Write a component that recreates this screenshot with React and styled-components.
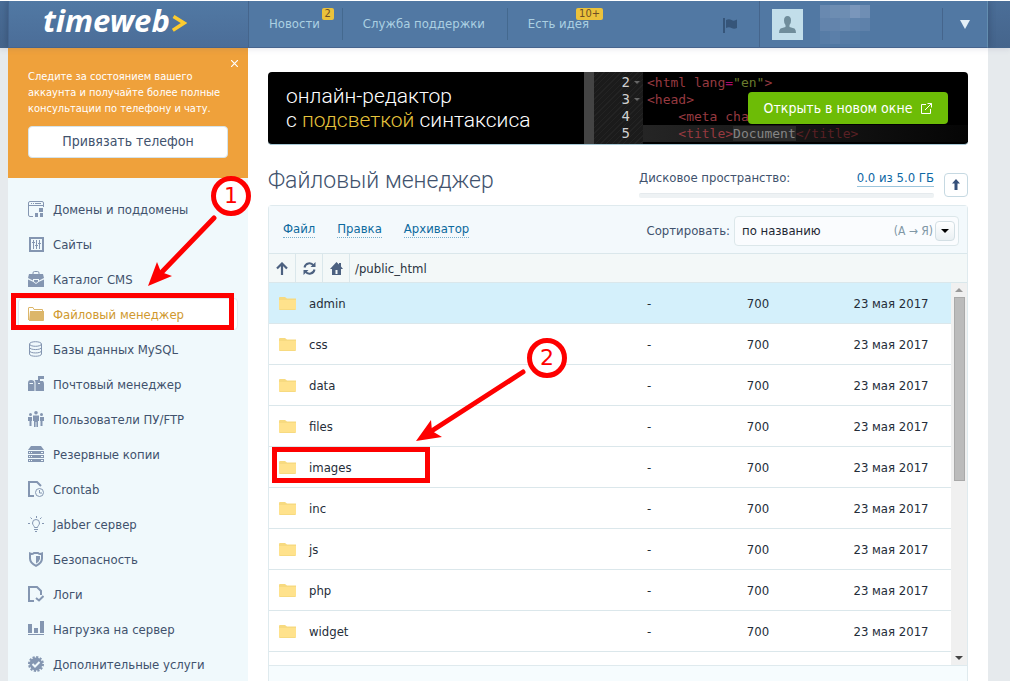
import React from "react";
import styled, { createGlobalStyle, css } from "styled-components";

const GlobalStyle = createGlobalStyle`
  *, *::before, *::after { box-sizing: border-box; }
  body {
    margin: 0;
    background: #e6eaed;
    color: #41526d;
    font-family: "DejaVu Sans Condensed", "Noto Sans", sans-serif;
    font-size: 13px;
    line-height: 16px;
    overflow-x: hidden;
  }
  button, select { font: inherit; color: inherit; }
  a { color: inherit; text-decoration: none; }
  ul { list-style: none; margin: 0; padding: 0; }
`;

const Page = styled.div`
  position: relative;
  display: flex;
  flex-direction: column;
  height: 100vh;
  min-height: 600px;
  overflow: hidden;
`;

/* ---------- Header ---------- */

const Header = styled.header`
  flex: none;
  height: 48px;
  padding: 0 22px 0 8px;
  background: linear-gradient(#4b6e98, #45658c);
  border-top: 1px solid #fff;
  box-shadow: 0 1px 6px rgba(70, 80, 110, 0.14);
  z-index: 1;
`;

const HeaderInner = styled.div`
  display: flex;
  height: 47px;
  background: #5178a3;
  border-left: 1px solid #456690;
  border-right: 1px solid #638eb0;
  border-bottom: 1px solid #46648e;
  box-shadow: 0 0 8px rgba(35, 55, 85, 0.5);
  clip-path: inset(0 -8px);
`;

const Brand = styled.a`
  display: flex;
  align-items: flex-start;
  width: 240px;
  padding-left: 34px;
  gap: 2px;
  background: linear-gradient(#5179a4, #4b6d98);
  border-right: 1px solid #45658c;
  color: #fff;
  font: italic bold 31px/38px "Noto Sans", sans-serif;
  svg { margin-top: 14px; }
`;

const TopNav = styled.nav`
  display: flex;
  align-items: center;
  flex: 1;
`;

const TopLink = styled.a`
  position: relative;
  display: flex;
  align-items: center;
  height: 32px;
  padding: 0 22px 0 20px;
  border-right: 1px solid #44698f;
  color: #abd0e2;
  white-space: nowrap;
  &:last-child { border: 0; }
`;

const Count = styled.span`
  position: absolute;
  top: 0;
  right: 8px;
  padding: 0 3px;
  border-radius: 2px;
  background: #ebc23b;
  color: #6e4f26;
  font-size: 11px;
  line-height: 12px;
`;

const FlagButton = styled.button`
  width: 56px;
  padding: 0;
  border: 0;
  border-right: 1px solid #45658c;
  background: none;
  text-align: left;
  svg { display: block; margin-top: 2px; }
`;

const Account = styled.div`
  display: flex;
  align-items: center;
  width: 182px;
  padding-left: 12px;
  gap: 17px;
`;

const Avatar = styled.span`
  display: flex;
  width: 31px;
  height: 31px;
  align-items: center;
  justify-content: center;
  background: #c2deea;
`;

const Mosaic = styled.span`
  display: grid;
  grid-template-columns: repeat(5, 10px);
  grid-auto-rows: 13px;
`;

const Pixel = styled.i`
  background: rgba(190, 200, 225, ${(p) => p.$level / 100});
`;

const AccountMenu = styled.button`
  display: flex;
  align-items: center;
  justify-content: center;
  width: 45px;
  height: 32px;
  margin-top: 7px;
  padding: 0;
  border: 0;
  border-left: 1px solid #45658c;
  background: none;
`;

/* ---------- Body and sidebar ---------- */

const Body = styled.div`
  display: flex;
  flex: 1;
  min-height: 0;
  margin: 0 22px 0 8px;
  background: #fff;
`;

const Sidebar = styled.aside`
  flex: none;
  width: 240px;
  background: #f0f9fc;
`;

const Notice = styled.section`
  position: relative;
  height: 130px;
  padding: 21px 20px;
  background: #efa13b;
  color: #fff;
  p { margin: 0 0 9px; font-size: 11px; line-height: 16px; white-space: nowrap; }
`;

const NoticeClose = styled.button`
  position: absolute;
  top: 7px;
  right: 6px;
  width: 16px;
  height: 16px;
  padding: 0;
  border: 0;
  background: none;
  svg { display: block; margin: auto; }
`;

const PhoneButton = styled.button`
  width: 100%;
  height: 32px;
  padding: 0 0 2px;
  border: 1px solid #d5e3ea;
  border-radius: 4px;
  background: #fff;
  color: #41526d;
  font-size: 14px;
`;

const Menu = styled.ul`
  display: flex;
  flex-direction: column;
  gap: 3px;
  padding: 15px 10px 0;
`;

const MenuLink = styled.a`
  display: flex;
  align-items: center;
  gap: 9px;
  height: 32px;
  padding: 0 9px;
  border: 1px solid transparent;
  border-radius: 4px;
  white-space: nowrap;
  svg { flex: none; color: #8496b1; }
  span { padding-top: 2px; }
  ${(p) => p.$active && css`
    background: #fff;
    border-color: #e0eaef;
    color: #d0992f;
    svg { color: #dcb66a; }
  `}
`;

/* ---------- Main ---------- */

const Main = styled.main`
  display: flex;
  flex-direction: column;
  flex: 1;
  min-width: 0;
  padding: 24px 20px 0;
`;

const Banner = styled.section`
  position: relative;
  display: flex;
  flex: none;
  height: 73px;
  overflow: hidden;
  border-radius: 4px;
  border-bottom: 1px solid #a7c8d5;
  background: #000;
`;

const Slogan = styled.p`
  flex: 1;
  margin: 0;
  padding: 12px 18px;
  color: #fff;
  font: 300 21px/24px Roboto, sans-serif;
  white-space: nowrap;
  em { color: #e7c43c; font-style: normal; }
`;

const Editor = styled.div`
  display: flex;
  flex: none;
  width: 384px;
  border-left: 10px solid #444;
  font: 13px/17px "DejaVu Sans Mono", monospace;
`;

const Gutter = styled.div`
  width: 49px;
  padding: 2px 3px;
  background: repeating-linear-gradient(135deg, #1b1b1b 0 3px, #232323 3px 4px);
  color: #d0d0d0;
`;

const GutterLine = styled.div`
  display: flex;
  align-items: center;
  justify-content: flex-end;
  gap: 4px;
  font-size: 14px;
  svg { width: 6px; }
`;

const Code = styled.pre`
  flex: 1;
  margin: 0;
  padding-top: 2px;
  font: inherit;
`;

const CodeLine = styled.div`
  padding-left: 4px;
  background: ${(p) => (p.$current ? "linear-gradient(90deg, #252525, #050505)" : "none")};
  color: #963a40;
`;

const Tok = styled.span`
  color: ${(p) => p.$color};
  background: ${(p) => p.$bg || "none"};
`;

const OpenButton = styled.a`
  position: absolute;
  top: 20px;
  right: 20px;
  display: flex;
  align-items: center;
  justify-content: center;
  gap: 9px;
  width: 200px;
  height: 32px;
  border-radius: 4px;
  background: #6dbc06;
  color: #fff;
  font-size: 14px;
`;

const TitleRow = styled.div`
  display: flex;
  flex: none;
  height: 60px;
  padding-top: 20px;
  h1 {
    flex: 1;
    margin: 0;
    font: 300 23px/32px Roboto, sans-serif;
    white-space: nowrap;
  }
`;

const Disk = styled.div`
  width: 295px;
  margin-right: 10px;
  padding-top: 5px;
`;

const DiskLabel = styled.div`
  display: flex;
  justify-content: space-between;
  align-items: flex-start;
  a { color: #0d68a5; border-bottom: 1px solid #9cc5dc; }
`;

const DiskBar = styled.div`
  height: 5px;
  margin-top: 6px;
  border-radius: 2px;
  background: #eef2f4;
  border-top: 1px solid #e5eaed;
`;

const UpButton = styled.button`
  display: flex;
  align-items: center;
  justify-content: center;
  width: 24px;
  height: 24px;
  margin-top: 8px;
  padding: 0 0 2px;
  border: 1px solid #c6d9e2;
  border-radius: 4px;
  background: #fff;
`;

const Panel = styled.section`
  display: flex;
  flex-direction: column;
  flex: 1;
  min-height: 0;
  border: 1px solid #dfeaee;
  border-bottom: 0;
  border-radius: 4px 4px 0 0;
  background: #f6fcfe;
`;

const Toolbar = styled.div`
  display: flex;
  flex: none;
  align-items: flex-start;
  gap: 22px;
  height: 48px;
  padding: 10px 8px 0 14px;
  border-bottom: 1px solid #dae7eb;
  background: #f3f9fc;
`;

const ToolLink = styled.a`
  margin-top: 5px;
  color: #0d6a9e;
  border-bottom: 1px dotted #78afcb;
`;

const Sorter = styled.div`
  display: flex;
  align-items: center;
  gap: 4px;
  margin-left: auto;
`;

const SelectBox = styled.div`
  position: relative;
  width: 225px;
  select {
    display: block;
    width: 100%;
    height: 30px;
    padding: 0 90px 1px 7px;
    border: 1px solid #dce7ea;
    border-radius: 4px;
    background: #fafcfe;
    color: #1e2733;
    appearance: none;
  }
`;

const SelectHint = styled.span`
  position: absolute;
  top: 0;
  right: 4px;
  display: flex;
  align-items: center;
  gap: 2px;
  height: 30px;
  color: #8097a5;
  font-size: 12px;
  pointer-events: none;
`;

const SelectArrow = styled.span`
  display: flex;
  align-items: center;
  justify-content: center;
  width: 20px;
  height: 20px;
  border: 1px solid #d3dfe4;
  border-radius: 4px;
  background: linear-gradient(#fff, #eaf0f3);
`;

const PathBar = styled.div`
  display: flex;
  flex: none;
  height: 29px;
  border-bottom: 1px solid #dae7eb;
  background: #f3f8f8;
  color: #29323e;
  line-height: 29px;
  span { padding-left: 5px; }
`;

const PathButton = styled.button`
  display: flex;
  align-items: center;
  justify-content: center;
  width: 27px;
  padding: 0;
  border: 0;
  border-right: 1px solid #dae7eb;
  background: none;
`;

const FileScroll = styled.div`
  display: flex;
  flex: none;
  height: 383px;
  overflow: hidden;
  border-bottom: 1px solid #dfeaee;
  background: #fff;
`;

const FileTable = styled.table`
  flex: 1;
  width: 100%;
  height: max-content;
  border-collapse: separate;
  border-spacing: 0;
  table-layout: fixed;
  color: #252d39;
`;

const FileRow = styled.tr`
  background: ${(p) => (p.$selected ? "#d4f0fb" : "#fff")};
  td {
    height: 41px;
    padding: 2px 0 0;
    border-bottom: 1px solid #dbe7eb;
    text-align: center;
    white-space: nowrap;
  }
  td:first-child { padding: 0 0 0 10px; }
  td:nth-child(2) { text-align: left; }
  svg { display: block; }
`;

const Scrollbar = styled.div`
  display: flex;
  flex-direction: column;
  align-items: center;
  flex: none;
  width: 16px;
  padding: 5px 0;
  background: #f0f0f0;
`;

const Thumb = styled.div`
  width: 11px;
  height: 184px;
  margin: 5px 0 auto;
  border: 1px solid #a9a9a9;
  background: #bbb;
`;

/* ---------- Annotations over the page ---------- */

const Frame = styled.div`
  position: absolute;
  z-index: 3;
  left: ${(p) => p.$x}px;
  top: ${(p) => p.$y}px;
  width: ${(p) => p.$w}px;
  height: ${(p) => p.$h}px;
  border: 5px solid #fe0000;
  pointer-events: none;
`;

const Step = styled.div`
  position: absolute;
  z-index: 3;
  left: ${(p) => p.$x}px;
  top: ${(p) => p.$y}px;
  display: flex;
  align-items: center;
  justify-content: center;
  width: 40px;
  height: 40px;
  border: 5px solid #fe0000;
  border-radius: 50%;
  background: #fff;
  color: #fe0000;
  font: 22px/30px "DejaVu Sans", sans-serif;
`;

const Arrows = styled.svg`
  position: absolute;
  z-index: 3;
  left: 140px;
  top: 200px;
  pointer-events: none;
`;

/* ---------- Icons ---------- */

const Icon = ({ children, size = 16 }) => (
  <svg width={size} height={size} viewBox="0 0 16 16" fill="currentColor" aria-hidden="true">
    {children}
  </svg>
);

const stroke = { fill: "none", stroke: "currentColor" };

const icons = {
  domains: (
    <Icon>
      <path {...stroke} d="M5 15.5H2Q.5 15.5 .5 14V2Q.5.5 2 .5h12Q15.5.5 15.5 2v4M1 4.5h14" />
      <path d="M3 2h1v1H3zM5 2h1v1H5zM7 2h6v1H7zM11 7h4v4h-4zM7 12h3v4H7zM12 12h3v4h-3z" />
    </Icon>
  ),
  sites: (
    <Icon>
      <path {...stroke} strokeWidth="2" d="M2 2h13v13H2z" />
      <path d="M5 4h1v9H5zM8 4h1v9H8zM11 4h1v9h-1zM4 6h3v1H4zM7 9h3v1H7zM10 7h3v1h-3z" />
    </Icon>
  ),
  catalog: (
    <Icon>
      <path {...stroke} d="M5 3.5V2Q5 .5 6.500.5h3Q11 .5 11 2v1.500" />
      <path d="M1 3h14l1 4-5 2.500V8H5v1.500L0 7zM6 9h4v1.500L8 12l-2-1.500z" />
      <path d="M0 8.500l5 2.300L8 13l3-2.200 5-2.300V16H0z" />
    </Icon>
  ),
  files: (
    <Icon>
      <path {...stroke} d="M.5 14V2Q.5 1.500 1 1.500h4l1 2h8.500V5" />
      <path d="M2 5h14v9q0 1-1 1H1z" />
    </Icon>
  ),
  database: (
    <Icon>
      <g {...stroke}>
        <ellipse cx="7.500" cy="3" rx="6" ry="2.300" />
        <path d="M1.500 3v10c0 3 12 3 12 0V3M1.500 6.300c0 3 12 3 12 0M1.500 9.700c0 3 12 3 12 0" />
      </g>
    </Icon>
  ),
  mail: (
    <Icon>
      <path fillRule="evenodd" d="M0 15V7q0-3 3-3 3.500 0 3.500 3v8zM1.500 7v1H5V7zM7.500 15V7q0-2-1-3H10v4h2V5h3q1 1 1 3v7z" />
      <path d="M10 0h6v3h-4v4h-2z" />
    </Icon>
  ),
  users: (
    <Icon>
      <circle cx="2.500" cy="3.500" r="1.500" />
      <circle cx="8" cy="1.800" r="1.800" />
      <circle cx="13.500" cy="3.500" r="1.500" />
      <path d="M0 6h4v4H3.500v5h-2v-5H0zM5 4.500h6V10h-1v6H8.400v-5h-.8v5H6v-6H5zM12 6h4v4h-1.500v5h-2v-5H12z" />
    </Icon>
  ),
  backup: (
    <Icon>
      <path d="M3 0h10l3 4H0z" />
      <path fillRule="evenodd" d="M0 5h16v3H0zm1 1v1h1V6zm2 0v1h1V6zm10 0v1h2V6zM0 9h16v3H0zm1 1v1h1v-1zm2 0v1h1v-1zm10 0v1h2v-1zM0 13h16v3H0zm1 1v1h1v-1zm2 0v1h1v-1zm10 0v1h2v-1z" />
    </Icon>
  ),
  crontab: (
    <Icon>
      <path {...stroke} strokeWidth="2" d="M6 15H1V1h8l4 4" />
      <circle {...stroke} cx="11.500" cy="11.500" r="4" />
      <path {...stroke} d="M11.500 9v3H14" />
    </Icon>
  ),
  jabber: (
    <Icon>
      <path {...stroke} d="M6.500 11.500C6.500 10 4.500 9 4.500 7a3.500 3.500 0 0 1 7 0c0 2-2 3-2 4.500zM6 13.500h4M7 15.500h2M0 7.500h2M14 7.500h2M2.500 1.500l1.500 1.500M13.500 1.500L12 3M8.500 0v2" />
    </Icon>
  ),
  security: (
    <Icon>
      <path {...stroke} strokeWidth="2" d="M2 2.500q3 1 4-.5h4q1 1.500 4 .5v5Q14 12 8 14.800 2 12 2 7.500z" />
      <path d="M8 5h4v3q-1 3-4 4.500z" />
    </Icon>
  ),
  logs: (
    <Icon>
      <path {...stroke} strokeWidth="2" d="M6 15H1V1h8l4 4v4M8 12l3 2.500 4.500-4.500" />
    </Icon>
  ),
  load: (
    <Icon>
      <path d="M0 3h4v9H0zM6 7h4v5H6zM12 0h4v12h-4zM0 13h16v1H0z" />
    </Icon>
  ),
  extra: (
    <Icon>
      <circle cx="8" cy="8" r="6.500" />
      <circle {...stroke} cx="8" cy="8" r="7" strokeWidth="2" strokeDasharray="2.200 1.460" />
      <path fill="none" stroke="#f0f9fc" strokeWidth="2" d="M4.500 8l2.500 2.500L11.500 6" />
    </Icon>
  ),
};

const menu = [
  ["domains", "Домены и поддомены"],
  ["sites", "Сайты"],
  ["catalog", "Каталог CMS"],
  ["files", "Файловый менеджер"],
  ["database", "Базы данных MySQL"],
  ["mail", "Почтовый менеджер"],
  ["users", "Пользователи ПУ/FTP"],
  ["backup", "Резервные копии"],
  ["crontab", "Crontab"],
  ["jabber", "Jabber сервер"],
  ["security", "Безопасность"],
  ["logs", "Логи"],
  ["load", "Нагрузка на сервер"],
  ["extra", "Дополнительные услуги"],
];

const folders = ["admin", "css", "data", "files", "images", "inc", "js", "php", "widget"];

const pixels = [22, 26, 26, 38, 28, 16, 16, 20, 14, 12, 6, 10, 5, 4, 0];

const Triangle = ({ w, h, color, up }) => (
  <svg width={w} height={h} viewBox="0 0 10 10" preserveAspectRatio="none" fill={color} aria-hidden="true">
    <path d={up ? "M0 10h10L5 0z" : "M0 0h10L5 10z"} />
  </svg>
);

const FolderIcon = () => (
  <svg width="17" height="13" viewBox="0 0 17 13" aria-hidden="true">
    <path fill="#f7da80" d="M0 1Q0 0 1 0h5l2 1.500h9V12q0 1-1 1H1q-1 0-1-1z" />
    <path fill="#ffe28c" d="M0 3h17v9H0z" />
  </svg>
);

export default function App() {
  return (
    <>
      <GlobalStyle />
      <Page>
        <Header>
          <HeaderInner>
            <Brand href="#home">
              timeweb
              <svg width="15" height="17" viewBox="0 0 15 17" aria-hidden="true">
                <path d="M1.500 1.500L12 8 .8 15.300" fill="none" stroke="#fccb2f" strokeWidth="3.600" />
              </svg>
            </Brand>
            <TopNav>
              <TopLink href="#news">Новости<Count>2</Count></TopLink>
              <TopLink href="#support">Служба поддержки</TopLink>
              <TopLink href="#idea">Есть идея<Count>10+</Count></TopLink>
            </TopNav>
            <FlagButton aria-label="Флаг">
              <svg width="36" height="15" viewBox="0 0 36 15" fill="#365579">
                <path d="M19 0h2v15h-2zM22 2q3-1.500 5.500 0T33 1.500V10q-3 1.500-5.500 0T22 10z" />
              </svg>
            </FlagButton>
            <Account>
              <Avatar>
                <svg width="17" height="17" viewBox="0 0 17 17" fill="#6f8d9b" aria-hidden="true">
                  <path d="M8.500 0Q12 0 12 4.500 12 8 10.500 9v2l5 1.500q1.500 1 1.500 4.500H0q0-3.500 1.500-4.500l5-1.500V9Q5 8 5 4.500 5 0 8.500 0z" />
                </svg>
              </Avatar>
              <Mosaic>{pixels.map((level, i) => <Pixel key={i} $level={level} />)}</Mosaic>
            </Account>
            <AccountMenu aria-label="Меню аккаунта"><Triangle w={10} h={9} color="#e3eff7" /></AccountMenu>
          </HeaderInner>
        </Header>

        <Body>
          <Sidebar>
            <Notice>
              <NoticeClose aria-label="Закрыть">
                <svg width="7" height="7" viewBox="0 0 7 7" stroke="#fff" strokeWidth="1.200"><path d="M0 0l7 7M7 0L0 7" /></svg>
              </NoticeClose>
              <p>Следите за состоянием вашего<br />аккаунта и получайте более полные<br />консультации по телефону и чату.</p>
              <PhoneButton>Привязать телефон</PhoneButton>
            </Notice>
            <nav>
              <Menu>
                {menu.map(([id, label]) => (
                  <li key={id}>
                    <MenuLink href={`#${id}`} $active={id === "files"}>{icons[id]}<span>{label}</span></MenuLink>
                  </li>
                ))}
              </Menu>
            </nav>
          </Sidebar>

          <Main>
            <Banner>
              <Slogan>онлайн-редактор<br />с <em>подсветкой</em> синтаксиса</Slogan>
              <Editor>
                <Gutter>
                  {[2, 3, 4, 5].map((n) => (
                    <GutterLine key={n}>
                      {n}
                      <Triangle w={6} h={3} color={n < 4 ? "#666" : "none"} />
                    </GutterLine>
                  ))}
                </Gutter>
                <Code>
                  <CodeLine>{"<html lang"}<Tok $color="#a80b6b">=</Tok><Tok $color="#6a7b2d">"en"</Tok>{">"}</CodeLine>
                  <CodeLine>{"<head>"}</CodeLine>
                  <CodeLine>{"    <meta cha"}</CodeLine>
                  <CodeLine $current>{"    <title>"}<Tok $color="#858585" $bg="#2b2b2b">Document</Tok><Tok $color="#592024">{"</title>"}</Tok></CodeLine>
                </Code>
              </Editor>
              <OpenButton href="#editor">
                Открыть в новом окне
                <svg width="11" height="11" viewBox="0 0 11 11" fill="none" stroke="#fff" aria-hidden="true">
                  <path d="M5 1.500H.5v9h9V6M6.500.5h4v4M10.500.5L4 7" />
                </svg>
              </OpenButton>
            </Banner>

            <TitleRow>
              <h1>Файловый менеджер</h1>
              <Disk>
                <DiskLabel><span>Дисковое пространство:</span><a href="#disk">0.0 из 5.0 ГБ</a></DiskLabel>
                <DiskBar />
              </Disk>
              <UpButton aria-label="Загрузить">
                <svg width="8" height="11" viewBox="0 0 8 11" fill="#35507a"><path d="M4 0l4 4.500H5.500V11h-3V4.500H0z" /></svg>
              </UpButton>
            </TitleRow>

            <Panel>
              <Toolbar>
                <ToolLink href="#file">Файл</ToolLink>
                <ToolLink href="#edit">Правка</ToolLink>
                <ToolLink href="#archive">Архиватор</ToolLink>
                <Sorter>
                  <label htmlFor="sort">Сортировать:</label>
                  <SelectBox>
                    <select id="sort" defaultValue="name">
                      <option value="name">по названию</option>
                    </select>
                    <SelectHint>
                      (А → Я)
                      <SelectArrow><Triangle w={8} h={4} color="#000" /></SelectArrow>
                    </SelectHint>
                  </SelectBox>
                </Sorter>
              </Toolbar>
              <PathBar>
                <PathButton aria-label="Вверх">
                  <svg width="12" height="13" viewBox="0 0 12 13" fill="none" stroke="#4c6180" strokeWidth="2.200"><path d="M6 13V2M1 6.500l5-5 5 5" /></svg>
                </PathButton>
                <PathButton aria-label="Обновить">
                  <svg width="13" height="13" viewBox="0 0 13 13" fill="none" stroke="#4c6180" strokeWidth="2">
                    <path d="M1.500 5.500a5 5 0 0 1 9-2M11.500 7.500a5 5 0 0 1-9 2" />
                    <path d="M12.500 0v5h-5zM.5 13V8h5z" fill="#4c6180" stroke="none" />
                  </svg>
                </PathButton>
                <PathButton aria-label="Домой">
                  <svg width="13" height="13" viewBox="0 0 13 13" fill="#4c6180"><path d="M6.500 0L9 2.500V1h2v3.500L13 7h-2v6H2V7H0zM5.500 8v4h2V8z" fillRule="evenodd" /></svg>
                </PathButton>
                <span>/public_html</span>
              </PathBar>
              <FileScroll>
                <FileTable>
                  <colgroup>
                    <col width="40" />
                    <col />
                    <col width="72" />
                    <col width="146" />
                    <col width="120" />
                  </colgroup>
                  <tbody>
                    {folders.map((name) => (
                      <FileRow key={name} $selected={name === "admin"}>
                        <td><FolderIcon /></td>
                        <td>{name}</td>
                        <td>-</td>
                        <td>700</td>
                        <td>23 мая 2017</td>
                      </FileRow>
                    ))}
                  </tbody>
                </FileTable>
                <Scrollbar>
                  <Triangle w={8} h={4} color="#999" up />
                  <Thumb />
                  <Triangle w={8} h={4} color="#444" />
                </Scrollbar>
              </FileScroll>
            </Panel>
          </Main>
        </Body>

        <Frame $x={11} $y={293} $w={223} $h={37} />
        <Frame $x={272} $y={447} $w={158} $h={36} />
        <Arrows width="400" height="250" viewBox="140 200 400 250" fill="#fe0000">
          <path d="M214 218L160 274M523 372L430 432" stroke="#fe0000" strokeWidth="5" strokeLinecap="round" />
          <path d="M148 286l9-24 4 10 11 4zM416 441l15-21 1 11 10 6z" />
        </Arrows>
        <Step $x={211} $y={176}>1</Step>
        <Step $x={527} $y={338}>2</Step>
      </Page>
    </>
  );
}
